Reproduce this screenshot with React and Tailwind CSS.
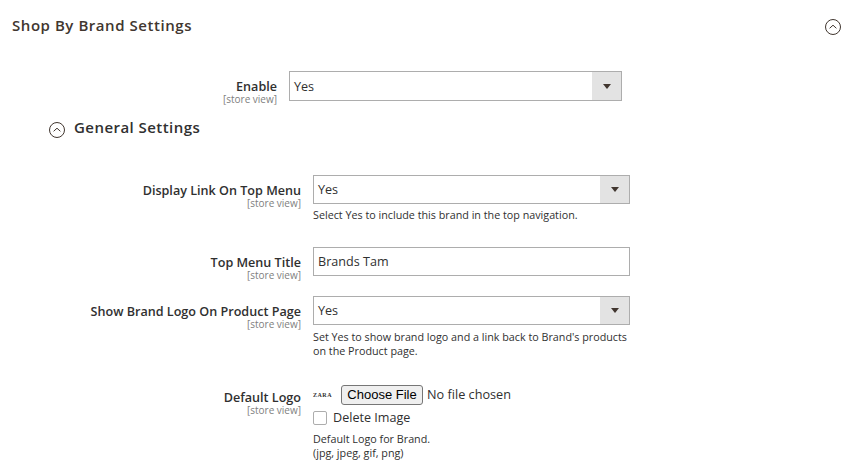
const FONT = "font-['Open_Sans',sans-serif]";

const Chevron = ({ className }) => (
  <svg viewBox="0 0 16 16" className={className} fill="none">
    <circle cx="8" cy="8" r="7.5" stroke="#41362f" strokeWidth="1" />
    <path d="M4.6 9.3 8 6.2l3.4 3.1" stroke="#41362f" strokeWidth="1" />
  </svg>
);

const SelectBox = ({ width, height = "h-[29px]", textPad = "pt-[1px]" }) => (
  <div className={`flex ${height} ${width} items-stretch border border-[#adadad] bg-white`}>
    <div className={`flex flex-1 items-center ${textPad} pl-1 text-[12.6px] text-[#303030]`}>Yes</div>
    <div className="flex w-[29px] items-center justify-center bg-[#e3e3e3]">
      <div className="h-0 w-0 border-x-[4px] border-t-[5px] border-x-transparent border-t-[#41362f]" />
    </div>
  </div>
);

const Label = ({ text, width }) => (
  <div className={`${width} shrink-0 pt-[8px] text-right`}>
    <div className="text-[12.6px] leading-[15px] font-semibold text-[#303030]">{text}</div>
    <div className="text-[10px] leading-[11px] text-[#808080]">[store view]</div>
  </div>
);

const Note = ({ children }) => (
  <div className="mt-[4px] text-[10.75px] leading-[14px] text-[#303030]">{children}</div>
);

const App = () => (
  <div className={`h-[472px] w-[849px] overflow-hidden bg-white ${FONT}`}>
    <div className="flex items-start justify-between pt-[15px] pr-[8px] pl-[12px]">
      <h1 className="text-[15px] leading-[20px] font-semibold tracking-[0.55px] text-[#41362f]">
        Shop By Brand Settings
      </h1>
      <Chevron className="mt-[4px] h-4 w-4" />
    </div>

    <div className="mt-[36px] flex gap-[12px]">
      <Label text="Enable" width="w-[277px]" />
      <SelectBox width="w-[333px]" height="h-[30px]" textPad="pt-[2px]" />
    </div>

    <div className="mt-[17px] flex items-center gap-[9px] pl-[49px]">
      <Chevron className="h-4 w-4" />
      <h2 className="-mt-[7px] text-[15px] leading-[20px] font-semibold tracking-[0.45px] text-[#303030]">General Settings</h2>
    </div>

    <div className="mt-[37px] flex gap-[12px]">
      <Label text="Display Link On Top Menu" width="w-[301px]" />
      <div>
        <SelectBox width="w-[317px]" />
        <Note>Select Yes to include this brand in the top navigation.</Note>
      </div>
    </div>

    <div className="mt-[25px] flex gap-[12px]">
      <Label text="Top Menu Title" width="w-[301px]" />
      <div className="flex h-[29px] w-[317px] items-center border border-[#adadad] bg-white pt-[1px] pl-1 text-[12.6px] text-[#303030]">
        Brands Tam
      </div>
    </div>

    <div className="mt-[15px] flex gap-[12px]">
      <Label text="Show Brand Logo On Product Page" width="w-[301px]" />
      <div className="w-[317px]">
        <SelectBox width="w-[317px]" />
        <div className="mt-[5px] text-[10.75px] leading-[14px] text-[#303030]">
          Set Yes to show brand logo and a link back to Brand's products on the Product page.
        </div>
      </div>
    </div>

    <div className="mt-[24px] flex gap-[12px]">
      <Label text="Default Logo" width="w-[301px]" />
      <div className="w-[317px] pt-[3px]">
        <div className="flex items-center">
          <span className="w-[28px] font-['Liberation_Serif',serif] text-[6px] font-bold tracking-[0.5px] text-[#303030]">ZARA</span>
          <span className="flex h-[20px] w-[82px] items-center justify-center rounded-[3px] border border-[#767676] bg-[#efefef] font-['Liberation_Sans',sans-serif] text-[13px] text-black">
            Choose File
          </span>
          <span className="ml-[4px] text-[12.7px] text-[#303030]">No file chosen</span>
        </div>
        <div className="mt-[5px] flex items-center gap-[6px]">
          <div className="h-[14px] w-[14px] rounded-[2px] border border-[#adadad] bg-white" />
          <span className="text-[12.6px] leading-[16px] text-[#303030]">Delete Image</span>
        </div>
        <div className="mt-[6px] text-[10.75px] leading-[14px] text-[#303030]">
          Default Logo for Brand.
          <br />
          (jpg, jpeg, gif, png)
        </div>
      </div>
    </div>
  </div>
);

export default App;
